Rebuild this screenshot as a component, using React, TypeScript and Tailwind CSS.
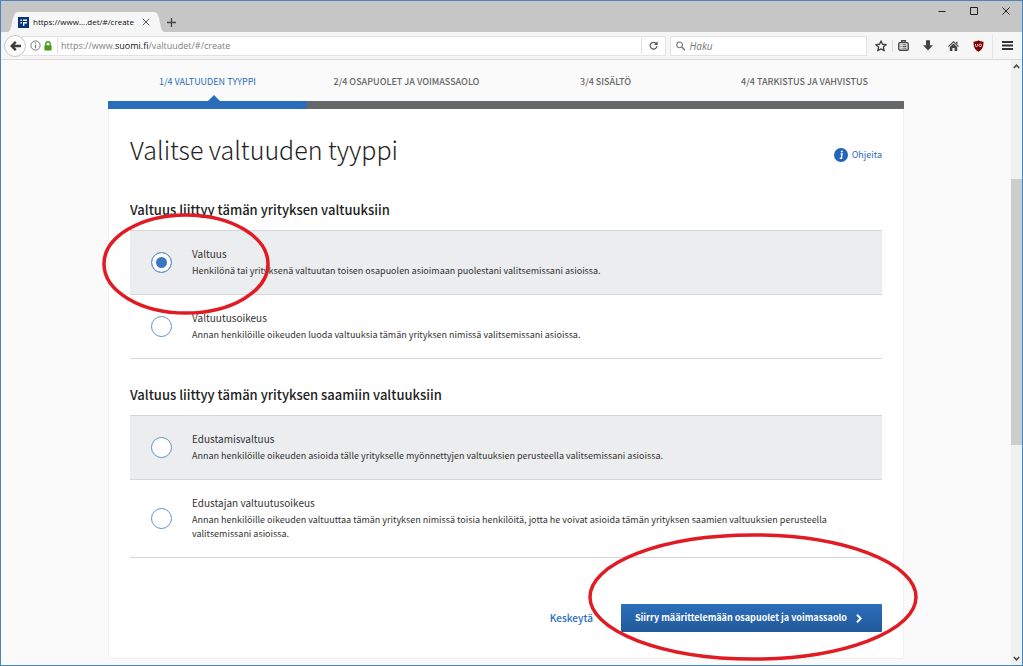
import { useState } from "react";
import type { ReactNode } from "react";

type Option = { id: string; title: string; text: string };
type Group = { heading: string; options: Option[] };

const steps = [
  "1/4 VALTUUDEN TYYPPI",
  "2/4 OSAPUOLET JA VOIMASSAOLO",
  "3/4 SISÄLTÖ",
  "4/4 TARKISTUS JA VAHVISTUS",
];

const groups: Group[] = [
  {
    heading: "Valtuus liittyy tämän yrityksen valtuuksiin",
    options: [
      {
        id: "valtuus",
        title: "Valtuus",
        text: "Henkilönä tai yrityksenä valtuutan toisen osapuolen asioimaan puolestani valitsemissani asioissa.",
      },
      {
        id: "valtuutusoikeus",
        title: "Valtuutusoikeus",
        text: "Annan henkilöille oikeuden luoda valtuuksia tämän yrityksen nimissä valitsemissani asioissa.",
      },
    ],
  },
  {
    heading: "Valtuus liittyy tämän yrityksen saamiin valtuuksiin",
    options: [
      {
        id: "edustamisvaltuus",
        title: "Edustamisvaltuus",
        text: "Annan henkilöille oikeuden asioida tälle yritykselle myönnettyjen valtuuksien perusteella valitsemissani asioissa.",
      },
      {
        id: "edustajan-valtuutusoikeus",
        title: "Edustajan valtuutusoikeus",
        text: "Annan henkilöille oikeuden valtuuttaa tämän yrityksen nimissä toisia henkilöitä, jotta he voivat asioida tämän yrityksen saamien valtuuksien perusteella valitsemissani asioissa.",
      },
    ],
  },
];

function IconButton({ label, className, children }: { label: string; className?: string; children: ReactNode }) {
  return (
    <button type="button" aria-label={label} className={`flex items-center justify-center ${className ?? "h-6 w-6"}`}>
      {children}
    </button>
  );
}

function TitleBar() {
  return (
    <div className="flex h-[31px] items-end justify-between bg-[#c6c6c6] pl-[7px]">
      <div className="flex items-end">
        <div className="flex items-end">
          <svg width="10" height="20" viewBox="0 0 10 20" aria-hidden="true">
            <path d="M0 20C5 19 3 0 10 0V20Z" fill="#f6f6f6" />
          </svg>
          <div className="flex h-5 items-center bg-[#f6f6f6]">
            <svg width="11" height="11" viewBox="0 0 11 11" aria-hidden="true">
              <rect width="11" height="11" fill="#073479" />
              <path d="M2.500 2.500h1.400v1.400H2.500zM5 2.500h4v1.400H5zM2.500 5h1.400v1.400H2.500zM5 5h4v1.400H5zM5 6.400h1.400v2.300H5z" fill="#fff" />
            </svg>
            <span className="pl-1 text-[8px] leading-4 text-[#111]">https://www....det/#/create</span>
            <IconButton label="Sulje välilehti" className="ml-1 h-4 w-4">
              <svg width="8" height="8" viewBox="0 0 8 8" stroke="#555" aria-hidden="true">
                <path d="M.7.7l6.6 6.6M7.3.7L.7 7.3" />
              </svg>
            </IconButton>
          </div>
          <svg width="10" height="20" viewBox="0 0 10 20" aria-hidden="true">
            <path d="M10 20C5 19 7 0 0 0V20Z" fill="#f6f6f6" />
          </svg>
        </div>
        <IconButton label="Uusi välilehti" className="h-5 w-4">
          <svg width="9" height="9" viewBox="0 0 9 9" stroke="#444" strokeWidth="1.3" aria-hidden="true">
            <path d="M4.5 0v9M0 4.5h9" />
          </svg>
        </IconButton>
      </div>
      <div className="flex h-full items-start">
        <IconButton label="Pienennä" className="h-5 w-8">
          <svg width="8" height="8" viewBox="0 0 8 8" stroke="#222" aria-hidden="true">
            <path d="M0.5 4.5h7" />
          </svg>
        </IconButton>
        <IconButton label="Suurenna" className="h-5 w-8">
          <svg width="8" height="8" viewBox="0 0 8 8" stroke="#222" fill="none" aria-hidden="true">
            <path d="M.5.5h7v7h-7z" />
          </svg>
        </IconButton>
        <IconButton label="Sulje" className="h-5 w-8">
          <svg width="8" height="8" viewBox="0 0 8 8" stroke="#222" aria-hidden="true">
            <path d="M.5.5l7 7M7.5.5l-7 7" />
          </svg>
        </IconButton>
      </div>
    </div>
  );
}

function Toolbar() {
  return (
    <div className="flex h-7 items-center border-b border-[#d8d8d8] bg-[#f6f6f6] pl-[3px]">
      <IconButton label="Takaisin" className="z-10 h-[22px] w-[22px] rounded-full border border-[#c8c8c8] bg-[#fbfbfb]">
        <svg width="11" height="10" viewBox="0 0 11 10" fill="none" stroke="#3c3c3c" strokeWidth="2.400" aria-hidden="true">
          <path d="M5.800.8L1.700 5l4.100 4.200M2 5h9" />
        </svg>
      </IconButton>
      <div className="-ml-1 flex h-5 flex-1 items-center border border-[#e2e2e2] bg-white pl-[7px]">
        <svg width="11" height="11" viewBox="0 0 11 11" fill="none" stroke="#777" aria-hidden="true">
          <circle cx="5.5" cy="5.5" r="4.6" />
          <path d="M5.5 4.8v3.4M5.5 2.6v1.2" strokeWidth="1.2" />
        </svg>
        <svg className="ml-[3px]" width="8" height="10" viewBox="0 0 8 10" aria-hidden="true">
          <path d="M1.8 5V3a2.2 2.2 0 014.4 0v2" fill="none" stroke="#4a9e1b" strokeWidth="1.4" />
          <rect x=".4" y="4.2" width="7.2" height="5.2" rx=".6" fill="#4a9e1b" />
        </svg>
        <a href="#/create" className="ml-[5px] flex-1 border-l border-[#e2e2e2] pl-[3px] text-[9px] leading-4 text-[#808080]">
          https://www.<span className="text-[#111]">suomi.fi</span>/valtuudet/#/create
        </a>
        <IconButton label="Lataa uudelleen" className="h-4 w-6 border-l border-[#e2e2e2]">
          <svg width="9" height="9" viewBox="0 0 9 9" fill="none" stroke="#555" strokeWidth="1.2" aria-hidden="true">
            <path d="M7.3 2.6A3.4 3.4 0 108 5" />
            <path d="M8.6.3v3.6H5z" fill="#555" stroke="none" />
          </svg>
        </IconButton>
      </div>
      <label className="ml-1 flex h-5 w-[197px] items-center border border-[#e2e2e2] bg-white pl-[5px]">
        <svg width="10" height="10" viewBox="0 0 10 10" fill="none" stroke="#777" strokeWidth="1.2" aria-hidden="true">
          <circle cx="3.8" cy="3.8" r="3" />
          <path d="M6 6l3.5 3.5" strokeWidth="1.6" />
        </svg>
        <input
          type="search"
          aria-label="Haku"
          placeholder="Haku"
          className="w-full bg-transparent pl-1 text-[10px] leading-4 italic outline-none placeholder:text-[#777]"
        />
      </label>
      <div className="flex items-center pl-[3px]">
        <IconButton label="Lisää kirjanmerkki" className="h-6 w-[22px]">
          <svg width="12" height="12" viewBox="0 0 12 12" fill="none" stroke="#444" strokeWidth="1.400" aria-hidden="true">
            <path d="M6 1l1.5 3.3 3.6.4-2.7 2.4.8 3.6L6 8.900l-3.200 1.800.8-3.600L.9 4.700l3.600-.4z" strokeLinejoin="round" />
          </svg>
        </IconButton>
        <IconButton label="Kirjanmerkit" className="h-3 w-[22px] border-l border-[#ddd]">
          <svg width="11" height="11" viewBox="0 0 11 11" fill="none" stroke="#444" strokeWidth="1.400" aria-hidden="true">
            <rect x=".8" y="2.600" width="9.400" height="7.600" rx="1.200" />
            <path d="M3.700 2.400V.8h3.600v1.600" />
            <path d="M2.500 4.800h1M4.500 4.800h4M2.500 6.500h1M4.500 6.500h4M2.500 8.200h1M4.500 8.200h4" strokeWidth=".9" />
          </svg>
        </IconButton>
        <IconButton label="Lataukset" className="h-6 w-[28px]">
          <svg width="10" height="11" viewBox="0 0 10 11" fill="#444" aria-hidden="true">
            <path d="M3 .3h4v4.900h3L5 10.600 0 5.200h3z" />
          </svg>
        </IconButton>
        <IconButton label="Koti" className="h-6 w-[22px]">
          <svg width="11" height="10" viewBox="0 0 11 10" fill="#444" aria-hidden="true">
            <path d="M5.500 0L11 5.200l-.8.8L5.500 1.600.8 6 0 5.200zM1.800 6l3.700-3.400L9.200 6v4H6.600V7H4.400v3H1.800zM8 .8h1.500v2.500L8 1.900z" />
          </svg>
        </IconButton>
        <IconButton label="uBlock" className="h-6 w-[28px]">
          <svg width="11" height="12" viewBox="0 0 11 12" aria-hidden="true">
            <path d="M5.500.3C7 1.300 8.700 1.700 10.500 1.700 10.500 6.500 9.500 9.500 5.500 11.700 1.500 9.500.5 6.500.5 1.700 2.300 1.700 4 1.300 5.500.3z" fill="#800000" />
            <path d="M2.500 4v1.600a1 1 0 002 0V4" fill="none" stroke="#fff" strokeWidth=".8" />
            <circle cx="7.200" cy="5.300" r="1.300" fill="none" stroke="#fff" strokeWidth=".8" />
          </svg>
        </IconButton>
        <IconButton label="Valikko" className="h-6 w-[30px] border-l border-[#e6e6e6]">
          <svg width="11" height="9" viewBox="0 0 11 9" stroke="#333" strokeWidth="2" aria-hidden="true">
            <path d="M0 1h11M0 4.500h11M0 8h11" />
          </svg>
        </IconButton>
      </div>
    </div>
  );
}

function Scrollbar() {
  return (
    <div className="flex w-[11px] shrink-0 flex-col items-center bg-[#f0f0f0]" aria-hidden="true">
      <svg className="my-1" width="7" height="5" viewBox="0 0 7 5" fill="none" stroke="#444" strokeWidth="1.500">
        <path d="M.8 4L3.500 1.200 6.200 4" />
      </svg>
      <div className="flex w-full flex-1 flex-col">
        <div className="flex-[107]" />
        <div className="flex-[267] bg-[#cdcdcd]" />
        <div className="flex-[208]" />
      </div>
      <svg className="my-1" width="7" height="5" viewBox="0 0 7 5" fill="none" stroke="#444" strokeWidth="1.500">
        <path d="M.8 1L3.500 3.800 6.200 1" />
      </svg>
    </div>
  );
}

function Steps() {
  return (
    <ol className="grid grid-cols-4 text-center text-[9px] leading-[14px] text-[#666]">
      {steps.map((step, i) => (
        <li key={step} aria-current={i === 0 ? "step" : undefined}>
          <div className={i === 0 ? "pt-[15px] pb-3 text-[#2a6ebb]" : "pt-[15px] pb-3 font-medium"}>{step}</div>
          <div className={i === 0 ? "relative h-2 bg-[#2a6ebb]" : "h-2 bg-[#656769]"}>
            {i === 0 && (
              <svg className="absolute bottom-full left-1/2" width="12" height="6" viewBox="0 0 12 6" aria-hidden="true">
                <path d="M0 6L6 0l6 6z" fill="#2a6ebb" />
              </svg>
            )}
          </div>
        </li>
      ))}
    </ol>
  );
}

export default function App() {
  const [selected, setSelected] = useState("valtuus");

  return (
    <div className="flex min-h-screen flex-col border border-[#4a86bd] bg-[#fafafa] font-['Open_Sans',sans-serif]">
      <TitleBar />
      <Toolbar />
      <div className="flex flex-1">
        <main className="flex-1 pb-1.5 font-['Noto_Sans_CJK_JP','Noto_Sans_CJK_SC',sans-serif] text-[#333]">
          <div className="mx-auto flex h-full max-w-[796px] flex-col">
            <Steps />
            <form
              className="flex-1 border border-t-0 border-[#f0f0f0] bg-white px-[21px] pb-6"
              onSubmit={(e) => e.preventDefault()}
            >
              <div className="flex items-center justify-between pt-5">
                <h1 className="text-[25px] leading-10 font-light text-[#222]">Valitse valtuuden tyyppi</h1>
                <a href="#ohjeita" className="flex items-center gap-1 pt-3 text-[9px] leading-[14px] text-[#2a6ebb]">
                  <svg width="14" height="14" viewBox="0 0 14 14" aria-hidden="true">
                    <circle cx="7" cy="7" r="7" fill="#2164b8" />
                    <path d="M6.500 5.800h1.600l-.8 4.400M5.700 10.400h2.600" fill="none" stroke="#fff" strokeWidth="1.300" />
                    <circle cx="7.800" cy="3.500" r="1" fill="#fff" />
                  </svg>
                  Ohjeita
                </a>
              </div>
              {groups.map((group, g) => (
                <fieldset key={group.heading} className={g === 0 ? "pt-[31px]" : "pt-[26px]"}>
                  <legend className="float-left w-full text-[13px] leading-5 font-medium text-[#222]">{group.heading}</legend>
                  <div className="clear-both pt-[10px]">
                    <div className="border-t border-[#d4d6d8]">
                      {group.options.map((option, i) => (
                        <label
                          key={option.id}
                          htmlFor={option.id}
                          className={`relative flex items-center gap-5 border-b border-[#d4d6d8] pt-[15px] pr-12 pb-4 pl-[21px] ${
                            i === 0 ? "bg-[#ebedee]" : "bg-white"
                          }`}
                        >
                          <input
                            type="radio"
                            id={option.id}
                            name="tyyppi"
                            checked={selected === option.id}
                            onChange={() => setSelected(option.id)}
                            className="h-[21px] w-[21px] shrink-0 appearance-none rounded-full border border-[#5f92cb] bg-white checked:bg-[#3a76c2] checked:shadow-[inset_0_0_0_4px_#fff]"
                          />
                          <span className="flex flex-col gap-0.5">
                            <span className="text-[10px] leading-4">{option.title}</span>
                            <span className="text-[9px] leading-[14px]">{option.text}</span>
                          </span>
                          {option.id === "valtuus" && (
                            <svg
                              className="pointer-events-none absolute top-[-18px] left-[-28px] z-10"
                              width="168"
                              height="102"
                              viewBox="0 0 168 102"
                              aria-hidden="true"
                            >
                              <ellipse cx="84" cy="51" rx="82" ry="49" fill="none" stroke="#e01b24" strokeWidth="3.500" />
                            </svg>
                          )}
                        </label>
                      ))}
                    </div>
                  </div>
                </fieldset>
              ))}
              <div className="flex items-center justify-end gap-7 pt-[46px]">
                <button type="button" className="text-[10px] leading-4 font-medium text-[#2a6ebb]">
                  Keskeytä
                </button>
                <div className="relative">
                  <button
                    type="submit"
                    className="flex h-7 items-center gap-[9px] rounded-[1px] bg-linear-to-b from-[#2a6ebb] to-[#235a9a] pr-5 pl-[14px] text-[9px] leading-4 font-bold text-white"
                  >
                    Siirry määrittelemään osapuolet ja voimassaolo
                    <svg width="6" height="9" viewBox="0 0 6 9" fill="none" stroke="#fff" strokeWidth="2" aria-hidden="true">
                      <path d="M1 .8l3.700 3.700L1 8.200" />
                    </svg>
                  </button>
                  <svg
                    className="pointer-events-none absolute top-[-71px] right-[-36px] z-10"
                    width="330"
                    height="128"
                    viewBox="0 0 330 128"
                    aria-hidden="true"
                  >
                    <ellipse cx="165" cy="64" rx="163" ry="62" fill="none" stroke="#e01b24" strokeWidth="3.500" />
                  </svg>
                </div>
              </div>
            </form>
          </div>
        </main>
        <Scrollbar />
      </div>
    </div>
  );
}
